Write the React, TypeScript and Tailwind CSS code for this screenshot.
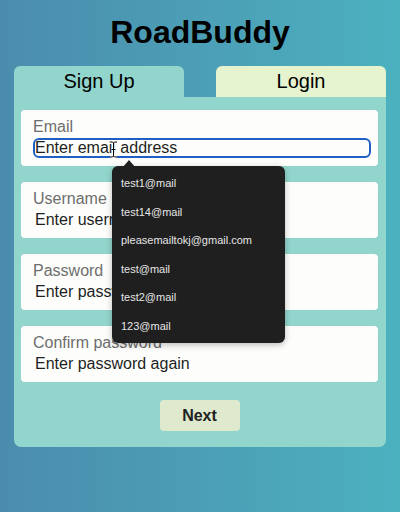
import React from "react";

const emails = [
  "test1@mail",
  "test14@mail",
  "pleasemailtokj@gmail.com",
  "test@mail",
  "test2@mail",
  "123@mail",
];

function Field({
  label,
  placeholder,
  focused,
  type = "text",
}: {
  label: string;
  placeholder: string;
  focused?: boolean;
  type?: string;
}) {
  return (
    <div className="h-[56px] bg-[#fdfefb] rounded-[4px] pt-[8px] pl-[12px] pr-[7px]">
      <div className="text-[16px] leading-[18px] text-[#6d6d6d]">{label}</div>
      <input
        type={type}
        placeholder={placeholder}
        className={
          focused
            ? "mt-[2px] block w-full h-[20px] text-[16px] leading-[16px] px-0 bg-transparent outline-none border-2 border-[#1f5fc4] rounded-[6px] text-[#1e1e1e] placeholder:text-[#1e1e1e]"
            : "mt-[2px] block w-full h-[20px] text-[16px] leading-[16px] px-0 bg-transparent outline-none border-2 border-transparent rounded-[6px] text-[#1e1e1e] placeholder:text-[#1e1e1e]"
        }
      />
    </div>
  );
}

export default function App() {
  return (
    <div className="relative w-[400px] h-[512px] overflow-hidden bg-linear-to-r from-[#4b8cad] to-[#4bb1bf] pt-[14px] font-['Liberation_Sans',Arial,sans-serif]">
      <h1 className="text-center text-[32px] leading-[37px] font-bold text-black">
        RoadBuddy
      </h1>
      <div className="mx-[14px] mt-[15px]">
        <div className="flex justify-between h-[31px]">
          <div className="w-[170px] bg-[#92d5cc] rounded-t-[6px] flex justify-center pt-[4px] text-[20px] leading-[23px] text-black">
            Sign Up
          </div>
          <div className="w-[170px] bg-[#e5f3cf] rounded-t-[6px] flex justify-center pt-[4px] text-[20px] leading-[23px] text-black">
            Login
          </div>
        </div>
        <div className="bg-[#92d5cc] rounded-b-[7px] pl-[7px] pr-[8px] pt-[13px] pb-[16px] flex flex-col">
          <div className="flex flex-col gap-[16px]">
            <Field label="Email" placeholder="Enter email address" focused />
            <Field label="Username" placeholder="Enter username" />
            <Field label="Password" placeholder="Enter password" type="password" />
            <Field
              label="Confirm password"
              placeholder="Enter password again"
              type="password"
            />
          </div>
          <button className="mt-[18px] self-center w-[80px] h-[31px] bg-[#dfe9cd] rounded-[4px] font-bold text-[16px] text-[#222]">
            Next
          </button>
        </div>
      </div>

      {/* I-beam cursor */}
      <svg
        className="absolute left-[109px] top-[141px]"
        width="9"
        height="17"
        viewBox="0 0 9 17"
      >
        <path
          d="M1 1 H3.5 L4.5 2 L5.5 1 H8 M4.5 2 V15 M1 16 H3.5 L4.5 15 L5.5 16 H8 M2.5 8.5 H6.5"
          fill="none"
          stroke="#fff"
          strokeWidth="2.6"
        />
        <path
          d="M1 1 H3.5 L4.5 2 L5.5 1 H8 M4.5 2 V15 M1 16 H3.5 L4.5 15 L5.5 16 H8 M2.5 8.5 H6.5"
          fill="none"
          stroke="#000"
          strokeWidth="1"
        />
      </svg>

      {/* Autofill dropdown */}
      <div className="absolute left-[112px] top-[160px]">
        <svg className="absolute left-[11px] top-0" width="12" height="7" viewBox="0 0 12 7">
          <path d="M0 7 L6 0 L12 7 Z" fill="#1f1f1f" />
        </svg>
        <div className="mt-[6px] w-[173px] h-[177px] bg-[#1f1f1f] rounded-[6px] shadow-[0_2px_6px_rgba(0,0,0,0.25)] pt-[3px]">
          {emails.map((e) => (
            <div
              key={e}
              className="h-[28.5px] flex items-center pl-[9px] text-[11px] text-[#e6e6e6]"
            >
              {e}
            </div>
          ))}
        </div>
      </div>
    </div>
  );
}
